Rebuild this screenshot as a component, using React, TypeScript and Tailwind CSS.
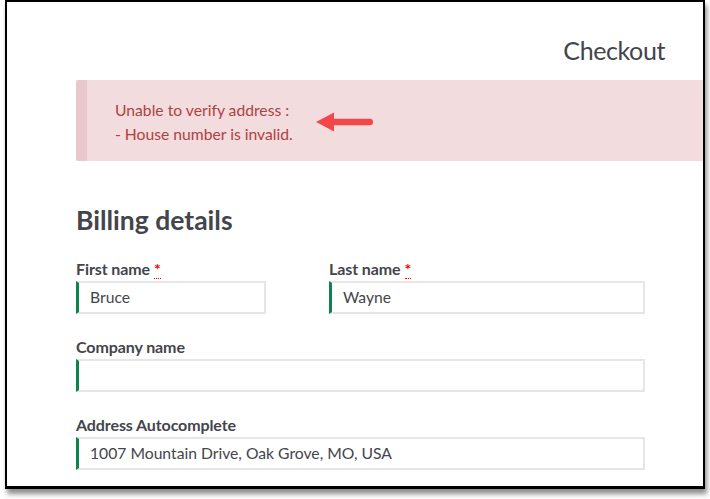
import type { ReactNode } from 'react'

function Label({ children, required }: { children: ReactNode; required?: boolean }) {
  return (
    <label className="block h-[18px] text-[16px] leading-[18px] font-bold text-[#43454b] tracking-[-0.1px]">
      {children}
      {required && (
        <abbr
          title="required"
          className="ml-[4px] text-[#ff0000] font-bold no-underline border-b border-dotted border-[#ff0000]"
        >
          *
        </abbr>
      )}
    </label>
  )
}

function Field({ value }: { value?: string }) {
  return (
    <div className="mt-[3px] h-[33px] flex items-center border-2 border-[#e6e6e6] border-l-[3px] border-l-[#0f834d] bg-white pl-[11px] text-[15.7px] text-[#43454b]">
      {value}
    </div>
  )
}

function ArrowMark() {
  // red annotation arrow pointing at the message
  return (
    <svg
      className="absolute left-[228px] top-[31px]"
      width="60"
      height="22"
      viewBox="0 0 60 22"
    >
      <path d="M1 11 L19 1.5 L19 20.5 Z" fill="#f2484a" />
      <rect x="16" y="7.8" width="42" height="6.5" rx="3.2" fill="#f2484a" />
    </svg>
  )
}

export default function App() {
  return (
    <div className="w-[710px] h-[499px] bg-white" style={{ fontFamily: 'Lato, "Noto Sans", sans-serif' }}>
      <div className="ml-[5px] w-[700px] h-[489px] border-2 border-b-[3px] border-black bg-white overflow-hidden shadow-[2px_5px_5px_rgba(0,0,0,0.45)]">
        <div className="pt-[33px] pl-[69px]">
          <div className="flex justify-end pr-[38px]">
            <h1 className="text-[25px] leading-[30px] text-[#43454b] tracking-[-0.4px]">Checkout</h1>
          </div>

          <div className="relative mt-[15px] mr-[-30px] h-[81px] rounded-[2px] bg-[#f2dcde] border-l-[11px] border-[#e8c8cc] pl-[28px] pt-[18px] text-[15.7px] leading-[24px] text-[#b0413e]">
            <p>Unable to verify address :</p>
            <p>- House number is invalid.</p>
            <ArrowMark />
          </div>

          <h2 className="mt-[43px] text-[26.5px] leading-[32px] font-bold text-[#43454b]">Billing details</h2>

          <div className="mt-[24px] w-[569px]">
            <div className="grid grid-cols-[190px_316px] gap-x-[63px]">
              <div>
                <Label required>First name</Label>
                <Field value="Bruce" />
              </div>
              <div>
                <Label required>Last name</Label>
                <Field value="Wayne" />
              </div>
            </div>

            <div className="mt-[24px]">
              <Label>Company name</Label>
              <Field />
            </div>

            <div className="mt-[24px]">
              <Label>Address Autocomplete</Label>
              <Field value="1007 Mountain Drive, Oak Grove, MO, USA" />
            </div>
          </div>
        </div>
      </div>
    </div>
  )
}
